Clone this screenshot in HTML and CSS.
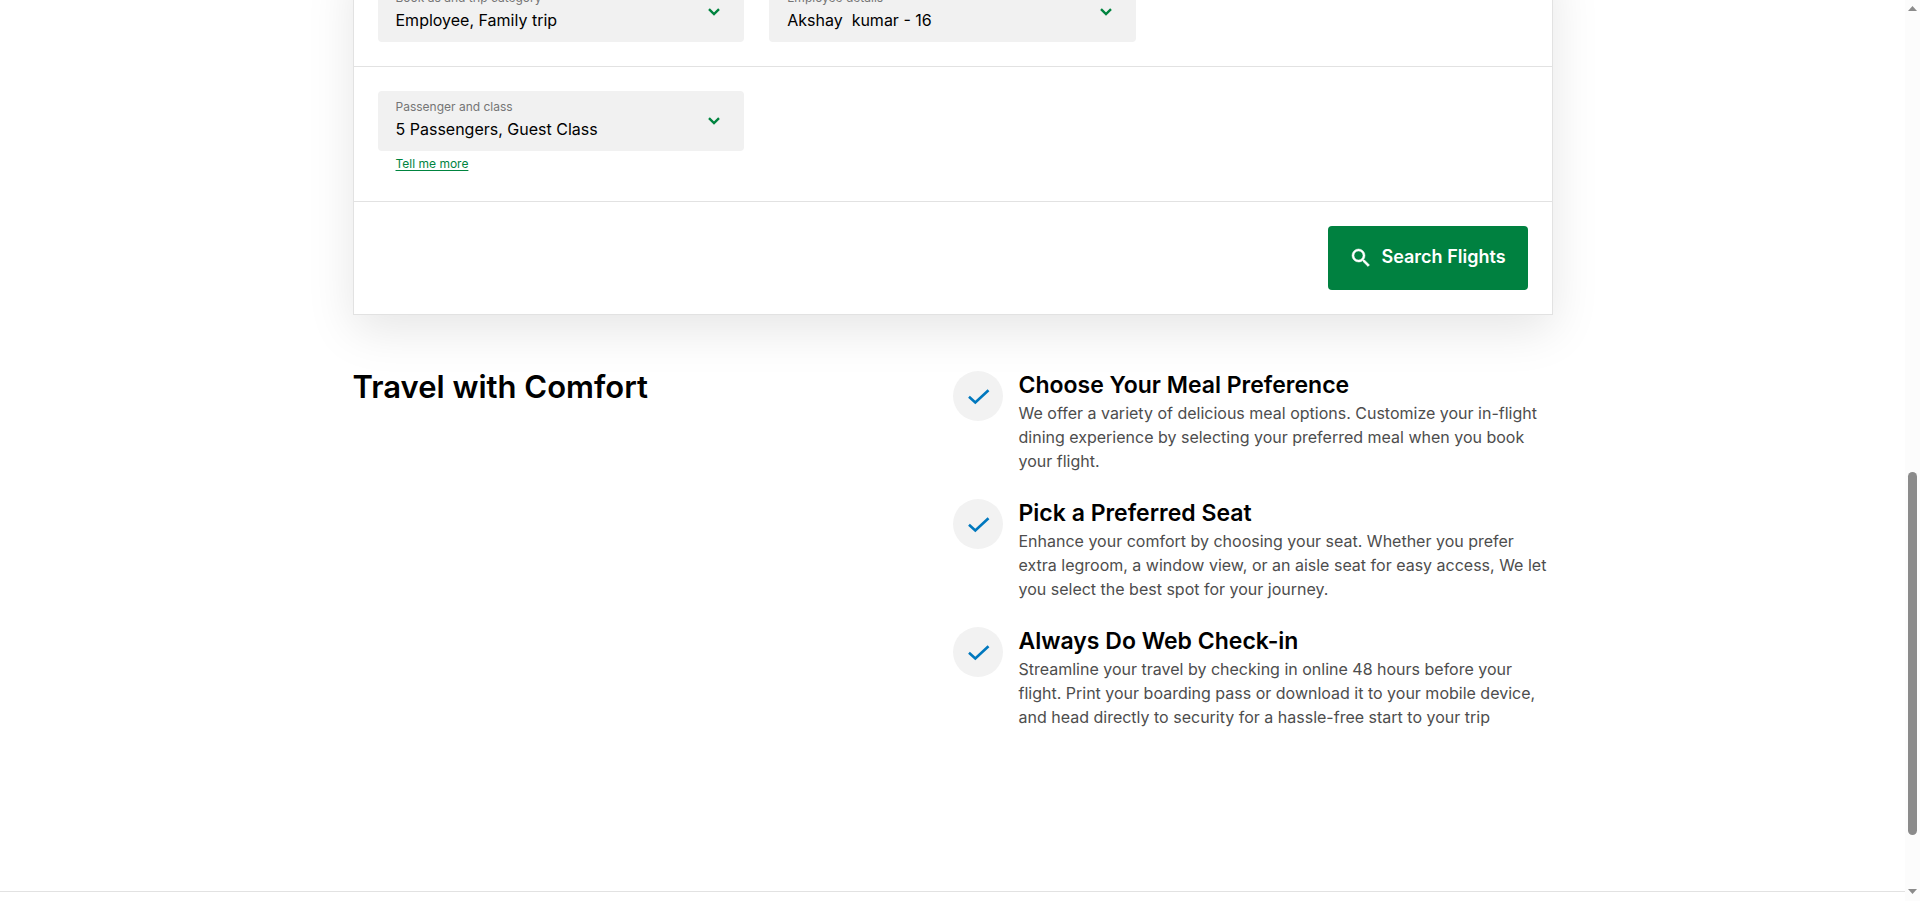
FILE: index.html
```html
<!DOCTYPE html>
<html lang="en">
<head>
<meta charset="utf-8">
<meta name="viewport" content="width=device-width, initial-scale=1">
<title>Search Flights</title>
<link rel="stylesheet" href="styles.css">
</head>
<body>
<div class="page">
  <main class="container">
    <form class="search-card">
      <div class="card-row">
        <div class="field">
          <div class="field-text">
            <label class="field-label" for="category">Book as and trip category</label>
            <select class="field-select" id="category"><option>Employee, Family trip</option></select>
          </div>
          <svg class="chevron" viewBox="0 0 12 8" aria-hidden="true"><path d="M1 1.2 6 6 11 1.2"/></svg>
        </div>
        <div class="field">
          <div class="field-text">
            <label class="field-label" for="employee">Employee details</label>
            <select class="field-select" id="employee"><option>Akshay&nbsp; kumar - 16</option></select>
          </div>
          <svg class="chevron" viewBox="0 0 12 8" aria-hidden="true"><path d="M1 1.2 6 6 11 1.2"/></svg>
        </div>
      </div>
      <div class="card-row">
        <div>
          <div class="field">
            <div class="field-text">
              <label class="field-label" for="passengers">Passenger and class</label>
              <select class="field-select" id="passengers"><option>5 Passengers, Guest Class</option></select>
            </div>
            <svg class="chevron" viewBox="0 0 12 8" aria-hidden="true"><path d="M1 1.2 6 6 11 1.2"/></svg>
          </div>
          <a class="more-link" href="#more">Tell me more</a>
        </div>
      </div>
      <div class="card-actions">
        <button class="search-button" type="button">
          <svg class="search-icon" viewBox="0 0 24 24" aria-hidden="true"><path d="M15.5 14h-.79l-.28-.27A6.47 6.47 0 0 0 16 9.5 6.5 6.5 0 1 0 9.5 16c1.61 0 3.09-.59 4.23-1.57l.27.28v.79l5 4.99L20.49 19l-4.99-5zm-6 0C7.01 14 5 11.99 5 9.5S7.01 5 9.5 5 14 7.01 14 9.5 11.99 14 9.5 14z"/></svg>
          <span class="search-text">Search Flights</span>
        </button>
      </div>
    </form>

    <section class="comfort">
      <h2 class="comfort-title">Travel with Comfort</h2>
      <ul class="tips">
        <li class="tip">
          <span class="tip-badge"><svg class="check" viewBox="0 0 50 50" aria-hidden="true"><path d="M16 25.8 22.3 31.5 35.5 19.2"/></svg></span>
          <div class="tip-body">
            <h3 class="tip-title">Choose Your Meal Preference</h3>
            <p class="tip-text">We offer a variety of delicious meal options. Customize your in-flight<br>dining experience by selecting your preferred meal when you book<br>your flight.</p>
          </div>
        </li>
        <li class="tip">
          <span class="tip-badge"><svg class="check" viewBox="0 0 50 50" aria-hidden="true"><path d="M16 25.8 22.3 31.5 35.5 19.2"/></svg></span>
          <div class="tip-body">
            <h3 class="tip-title">Pick a Preferred Seat</h3>
            <p class="tip-text">Enhance your comfort by choosing your seat. Whether you prefer<br>extra legroom, a window view, or an aisle seat for easy access, We let<br>you select the best spot for your journey.</p>
          </div>
        </li>
        <li class="tip">
          <span class="tip-badge"><svg class="check" viewBox="0 0 50 50" aria-hidden="true"><path d="M16 25.8 22.3 31.5 35.5 19.2"/></svg></span>
          <div class="tip-body">
            <h3 class="tip-title">Always Do Web Check-in</h3>
            <p class="tip-text">Streamline your travel by checking in online 48 hours before your<br>flight. Print your boarding pass or download it to your mobile device,<br>and head directly to security for a hassle-free start to your trip</p>
          </div>
        </li>
      </ul>
    </section>
  </main>
  <footer class="footer"></footer>
</div>
<div class="scrollbar" aria-hidden="true">
  <svg class="scroll-arrow" viewBox="0 0 9 5"><path d="M4.5 0 9 5H0z"/></svg>
  <div class="scroll-track"><div class="scroll-thumb"></div></div>
  <svg class="scroll-arrow" viewBox="0 0 9 5"><path d="M4.5 5 9 0H0z"/></svg>
</div>
</body>
</html>
```

FILE: styles.css
```css
* {
  box-sizing: border-box;
}

body {
  margin: 0;
  height: 100vh;
  display: flex;
  overflow: hidden;
  background: #fff;
  color: #000;
  font-family: Inter, "Liberation Sans", sans-serif;
  font-size: 16px;
}

.page {
  flex: 1;
  min-width: 0;
  overflow: hidden;
}

.container {
  max-width: 1200px;
  margin: 0 auto;
}

/* Search form; its upper part is scrolled out of view */
.search-card {
  margin-top: -43px;
  background: #fff;
  border: 1px solid #e2e2e2;
  box-shadow: 0 15px 45px rgba(0, 0, 0, 0.1);
}

.card-row {
  display: grid;
  grid-template-columns: repeat(3, 1fr);
  gap: 25px;
  padding: 24px;
  border-bottom: 1px solid #e2e2e2;
}

.field {
  display: flex;
  align-items: center;
  padding: 8px 24px 8px 18px;
  border-radius: 4px;
  background: #f1f1f1;
}

.field-text {
  flex: 1;
  min-width: 0;
}

.field-label {
  display: block;
  color: #757575;
  font-size: 12px;
  line-height: 16px;
}

.field-select {
  display: block;
  width: 100%;
  height: 28px;
  padding: 0;
  border: 0;
  appearance: none;
  background: transparent;
  color: #000;
  font: inherit;
}

.chevron {
  width: 12px;
  height: 8px;
  fill: none;
  stroke: #00843f;
  stroke-width: 2.4;
}

.more-link {
  display: block;
  width: max-content;
  margin: 5px 0 5px 18px;
  color: #00843f;
  font-size: 12px;
  line-height: 16px;
  text-underline-offset: 2px;
}

.card-actions {
  display: flex;
  justify-content: flex-end;
  padding: 24px;
}

.search-button {
  display: flex;
  align-items: center;
  justify-content: center;
  gap: 8px;
  width: 200px;
  height: 64px;
  padding: 0;
  border: 0;
  border-radius: 4px;
  background: #008140;
  color: #fff;
  font: inherit;
  font-size: 18px;
  font-weight: 600;
}

.search-text {
  padding-bottom: 4px;
}

.search-icon {
  width: 24px;
  height: 24px;
  fill: #fff;
  stroke: #fff;
  stroke-width: 0.5;
}

.comfort {
  display: grid;
  grid-template-columns: 1fr 1fr;
  padding: 56px 0 162px;
}

.comfort-title {
  margin: 0;
  font-size: 31px;
  font-weight: 600;
  line-height: 32px;
}

.tips {
  display: flex;
  flex-direction: column;
  gap: 26px;
  margin: 0;
  padding: 0;
  list-style: none;
}

.tip {
  display: flex;
  gap: 16px;
}

.tip-badge {
  flex: none;
  width: 50px;
  height: 50px;
  border-radius: 50%;
  background: #f2f2f2;
}

.check {
  display: block;
  fill: none;
  stroke: #0078be;
  stroke-width: 2.6;
}

.tip-body {
  white-space: nowrap;
}

.tip-title {
  margin: 0 0 2px;
  font-size: 23px;
  font-weight: 600;
  line-height: 28px;
}

.tip-text {
  margin: 0;
  color: #4d4d4d;
  line-height: 24px;
}

.footer {
  height: 16px;
  border-top: 1px solid #e2e2e2;
}

/* Page scroll bar */
.scrollbar {
  display: flex;
  flex-direction: column;
  align-items: center;
  width: 15px;
  padding: 6px 0 7px;
  background: #fcfcfc;
}

.scroll-arrow {
  width: 9px;
  height: 5px;
  fill: #8b8b8b;
}

.scroll-track {
  display: flex;
  flex: 1;
  flex-direction: column;
  justify-content: flex-end;
  width: 9px;
  padding-bottom: 54px;
}

.scroll-thumb {
  height: 44%;
  border-radius: 5px;
  background: #8b8b8b;
}
```
